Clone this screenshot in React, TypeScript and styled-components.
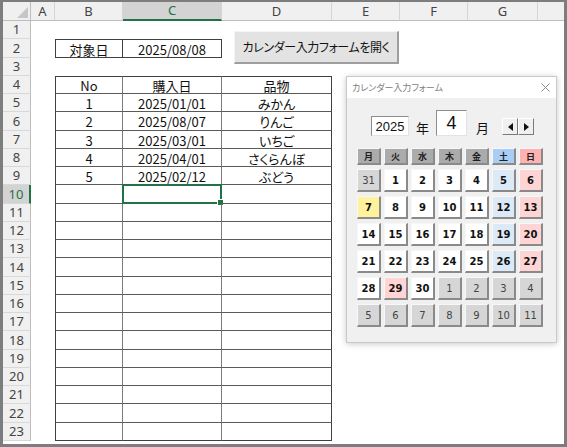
import React from "react";
import styled, { createGlobalStyle, css } from "styled-components";

const GlobalStyle = createGlobalStyle`
  body {
    margin: 0;
    font-family: "Noto Sans", "Noto Sans CJK JP", sans-serif;
  }
`;

const COLS = "28px 24px 68px 99px 110px 68px 68px 70px 68px";
const GREEN = "#217346";
const LETTERS = ["A", "B", "C", "D", "E", "F", "G", ""];

// row boundaries: header ends at y=21, 23 rows end at y=441
const tops = Array.from({ length: 24 }, (_, i) => Math.round((i * 420) / 23));
const heights = tops.slice(1).map((t, i) => t - tops[i]);

const Frame = styled.div`
  position: relative;
  width: 567px;
  height: 447px;
  box-sizing: border-box;
  border-style: solid;
  border-color: #7d7d7d;
  border-width: 2px 3px 3px 3px;
  background: #fff;
  overflow: hidden;
`;

const Sheet = styled.div`
  display: flex;
  flex-direction: column;
  width: 561px;
  overflow: hidden;
`;

const HeadRow = styled.div`
  display: grid;
  grid-template-columns: ${COLS};
  height: 19px;
  background: #f0f0f0;
`;

const Corner = styled.div`
  border-right: 1px solid #bdbdbd;
  border-bottom: 1px solid #bdbdbd;
  display: flex;
  align-items: flex-end;
  justify-content: flex-end;
  padding: 0 2px 2px 0;
`;

const ColHead = styled.div<{ $sel?: boolean }>`
  border-right: 1px solid #d5d5d5;
  border-bottom: 1px solid #bdbdbd;
  font-size: 13px;
  line-height: 18px;
  text-align: center;
  color: #444;
  ${(p) =>
    p.$sel &&
    css`
      background: #d3d3d3;
      color: ${GREEN};
      border-bottom: 2px solid ${GREEN};
      line-height: 17px;
    `}
`;

const SheetRow = styled.div<{ $h: number }>`
  display: grid;
  grid-template-columns: ${COLS};
  height: ${(p) => p.$h}px;
`;

const RowHead = styled.div<{ $sel?: boolean }>`
  background: #f0f0f0;
  border-right: 1px solid #bdbdbd;
  border-bottom: 1px solid #d8d8d8;
  font-size: 13px;
  line-height: 1;
  color: #444;
  display: flex;
  align-items: center;
  justify-content: center;
  ${(p) =>
    p.$sel &&
    css`
      background: #d3d3d3;
      color: ${GREEN};
      border-right: 2px solid ${GREEN};
    `}
`;

const Cell = styled.div<{ $t?: string; $l?: string; $r?: string; $b?: string }>`
  position: relative;
  box-sizing: border-box;
  display: flex;
  align-items: center;
  justify-content: center;
  padding-top: 1px;
  font-family: "Noto Sans CJK JP", sans-serif;
  font-feature-settings: "palt";
  font-size: 13px;
  line-height: 1;
  color: #111;
  white-space: nowrap;
  border-top: ${(p) => (p.$t ? `1px solid ${p.$t}` : "none")};
  border-left: ${(p) => (p.$l ? `1px solid ${p.$l}` : "none")};
  border-right: ${(p) => (p.$r ? `1px solid ${p.$r}` : "none")};
  border-bottom: ${(p) => (p.$b ? `1px solid ${p.$b}` : "none")};
`;

const Selection = styled.div`
  position: absolute;
  left: -1px;
  top: -1px;
  right: -1px;
  bottom: -1px;
  border: 2px solid ${GREEN};
  &::after {
    content: "";
    position: absolute;
    right: -4px;
    bottom: -4px;
    width: 5px;
    height: 5px;
    background: ${GREEN};
    border: 1px solid #fff;
  }
`;

const OpenButton = styled.div`
  position: absolute;
  left: 231px;
  top: 29px;
  width: 165px;
  height: 33px;
  box-sizing: border-box;
  background: #e3e3e3;
  border-style: solid;
  border-width: 1px 2px 2px 1px;
  border-color: #f4f4f4 #9e9e9e #9e9e9e #f4f4f4;
  display: flex;
  align-items: center;
  justify-content: center;
  font-family: "Noto Sans CJK JP", sans-serif;
  font-feature-settings: "palt";
  font-size: 12px;
  letter-spacing: -0.4px;
  line-height: 1;
  white-space: nowrap;
  color: #111;
`;

/* ---------- calendar form ---------- */

const Window = styled.div`
  position: absolute;
  left: 343px;
  top: 74px;
  width: 211px;
  height: 267px;
  box-sizing: border-box;
  border: 1px solid #c9c9c9;
  background: #f0f0f0;
  box-shadow: 0 1px 6px rgba(0, 0, 0, 0.22);
  display: flex;
  flex-direction: column;
`;

const TitleBar = styled.div`
  height: 21px;
  background: #fff;
  display: flex;
  align-items: center;
  justify-content: space-between;
  padding: 0 6px 0 5px;
  font-family: "Noto Sans CJK JP", sans-serif;
  font-feature-settings: "palt";
  font-size: 9px;
  color: #808080;
`;

const Body = styled.div`
  padding: 12px 0 0 10px;
`;

const TopRow = styled.div`
  display: flex;
  align-items: flex-end;
  padding-left: 14px;
  height: 26px;
`;

const InputBox = styled.div<{ $w: number; $h: number; $size: number; $ml?: number }>`
  width: ${(p) => p.$w}px;
  height: ${(p) => p.$h}px;
  margin-left: ${(p) => p.$ml ?? 0}px;
  box-sizing: border-box;
  background: #fff;
  border-style: solid;
  border-width: 1px;
  border-color: #8d8d8d #e3e3e3 #e3e3e3 #8d8d8d;
  display: flex;
  align-items: center;
  justify-content: center;
  font-family: "Liberation Sans", sans-serif;
  font-size: ${(p) => p.$size}px;
  color: #111;
`;

const Unit = styled.span<{ $ml: number }>`
  margin-left: ${(p) => p.$ml}px;
  font-family: "Noto Sans CJK JP", sans-serif;
  font-size: 13px;
  line-height: 16px;
  color: #111;
`;

const Spin = styled.div`
  display: flex;
  margin-left: 13px;
  margin-bottom: 1px;
`;

const SpinButton = styled.div`
  width: 16px;
  height: 17px;
  box-sizing: border-box;
  background: #f0f0f0;
  border-style: solid;
  border-width: 1px;
  border-color: #fff #7a7a7a #7a7a7a #fff;
  display: flex;
  align-items: center;
  justify-content: center;
`;

const Grid = styled.div`
  display: grid;
  grid-template-columns: repeat(7, 24px);
  column-gap: 3px;
  margin-top: 12px;
`;

const WeekRow = styled(Grid)`
  grid-auto-rows: 17px;
`;

const DayGrid = styled(Grid)`
  grid-auto-rows: 23px;
  row-gap: 4px;
  margin-top: 4px;
`;

const raised = css`
  box-sizing: border-box;
  border-style: solid;
  border-width: 1px 2px 2px 1px;
  border-color: #f7f7f7 #8a8a8a #8a8a8a #f7f7f7;
  display: flex;
  align-items: center;
  justify-content: center;
`;

const headColors: Record<string, string> = { day: "#ababab", sat: "#a9cdf4", sun: "#ffb2b2" };

const WeekHead = styled.div<{ $kind: string }>`
  ${raised}
  background: ${(p) => headColors[p.$kind]};
  font-family: "Noto Sans CJK JP", sans-serif;
  font-weight: 700;
  font-size: 9px;
  color: #222;
`;

type DayKind = "out" | "day" | "sat" | "sun" | "today";

const dayColors: Record<DayKind, string> = {
  out: "#d6d6d6",
  day: "#ffffff",
  sat: "#dce9f7",
  sun: "#ffd4d4",
  today: "#fff29c",
};

const DayButton = styled.div<{ $kind: DayKind }>`
  ${raised}
  background: ${(p) => dayColors[p.$kind]};
  font-family: "DejaVu Sans", sans-serif;
  font-size: 10px;
  font-weight: ${(p) => (p.$kind === "out" ? 400 : 700)};
  color: ${(p) => (p.$kind === "out" ? "#444" : "#111")};
`;

const purchases = [
  ["1", "2025/01/01", "みかん"],
  ["2", "2025/08/07", "りんご"],
  ["3", "2025/03/01", "いちご"],
  ["4", "2025/04/01", "さくらんぼ"],
  ["5", "2025/02/12", "ぶどう"],
];

const weekdays = ["月", "火", "水", "木", "金", "土", "日"];

function buildDays() {
  const days: { n: number; kind: DayKind }[] = [{ n: 31, kind: "out" }];
  for (let d = 1; d <= 30; d++) {
    const col = days.length % 7;
    let kind: DayKind = "day";
    if (col === 5) kind = "sat";
    if (col === 6 || d === 29) kind = "sun";
    if (d === 7) kind = "today";
    days.push({ n: d, kind });
  }
  for (let d = 1; days.length < 42; d++) days.push({ n: d, kind: "out" });
  return days;
}

const OUT = "#404040";
const IN = "#5a5a5a";
const VIN = "#7a7a7a";

function tableRow(r: number) {
  // r is the 1-based sheet row
  const cells: React.ReactNode[] = [];
  for (let c = 0; c < 8; c++) {
    let props: { $t?: string; $l?: string; $r?: string; $b?: string } = {};
    let text = "";
    if (r === 2 && (c === 1 || c === 2)) {
      props = { $t: OUT, $b: OUT, $r: OUT, $l: c === 1 ? OUT : undefined };
      text = c === 1 ? "対象日" : "2025/08/08";
    }
    if (r >= 4 && c >= 1 && c <= 3) {
      props = {
        $t: r === 4 ? OUT : undefined,
        $l: c === 1 ? OUT : undefined,
        $r: c === 3 ? OUT : VIN,
        $b: r === 23 ? OUT : IN,
      };
      if (r === 4) text = ["No", "購入日", "品物"][c - 1];
      if (r >= 5 && r <= 9) text = purchases[r - 5][c - 1];
    }
    cells.push(
      <Cell key={c} {...props}>
        {text}
        {r === 10 && c === 2 && <Selection />}
      </Cell>
    );
  }
  return cells;
}

export default function App() {
  const days = buildDays();
  return (
    <>
      <GlobalStyle />
      <Frame>
        <Sheet>
          <HeadRow>
            <Corner>
              <svg width="11" height="11" viewBox="0 0 11 11">
                <polygon points="11,0 11,11 0,11" fill="#c6c6c6" />
              </svg>
            </Corner>
            {LETTERS.map((l, i) => (
              <ColHead key={i} $sel={l === "C"}>
                {l}
              </ColHead>
            ))}
          </HeadRow>
          {heights.map((h, i) => (
            <SheetRow key={i} $h={h}>
              <RowHead $sel={i + 1 === 10}>{i + 1}</RowHead>
              {tableRow(i + 1)}
            </SheetRow>
          ))}
        </Sheet>

        <OpenButton>カレンダー入力フォームを開く</OpenButton>

        <Window>
          <TitleBar>
            <span>カレンダー入力フォーム</span>
            <svg width="9" height="9" viewBox="0 0 9 9">
              <path d="M0.5 0.5 L8.5 8.5 M8.5 0.5 L0.5 8.5" stroke="#8a8a8a" strokeWidth="1" />
            </svg>
          </TitleBar>
          <Body>
            <TopRow>
              <InputBox $w={38} $h={20} $size={13}>
                2025
              </InputBox>
              <Unit $ml={7}>年</Unit>
              <InputBox $w={31} $h={26} $size={18} $ml={7}>
                4
              </InputBox>
              <Unit $ml={9}>月</Unit>
              <Spin>
                <SpinButton>
                  <svg width="5" height="8" viewBox="0 0 5 8">
                    <polygon points="5,0 5,8 0,4" fill="#111" />
                  </svg>
                </SpinButton>
                <SpinButton>
                  <svg width="5" height="8" viewBox="0 0 5 8">
                    <polygon points="0,0 0,8 5,4" fill="#111" />
                  </svg>
                </SpinButton>
              </Spin>
            </TopRow>
            <WeekRow>
              {weekdays.map((w, i) => (
                <WeekHead key={w} $kind={i === 5 ? "sat" : i === 6 ? "sun" : "day"}>
                  {w}
                </WeekHead>
              ))}
            </WeekRow>
            <DayGrid>
              {days.map((d, i) => (
                <DayButton key={i} $kind={d.kind}>
                  {d.n}
                </DayButton>
              ))}
            </DayGrid>
          </Body>
        </Window>
      </Frame>
    </>
  );
}
